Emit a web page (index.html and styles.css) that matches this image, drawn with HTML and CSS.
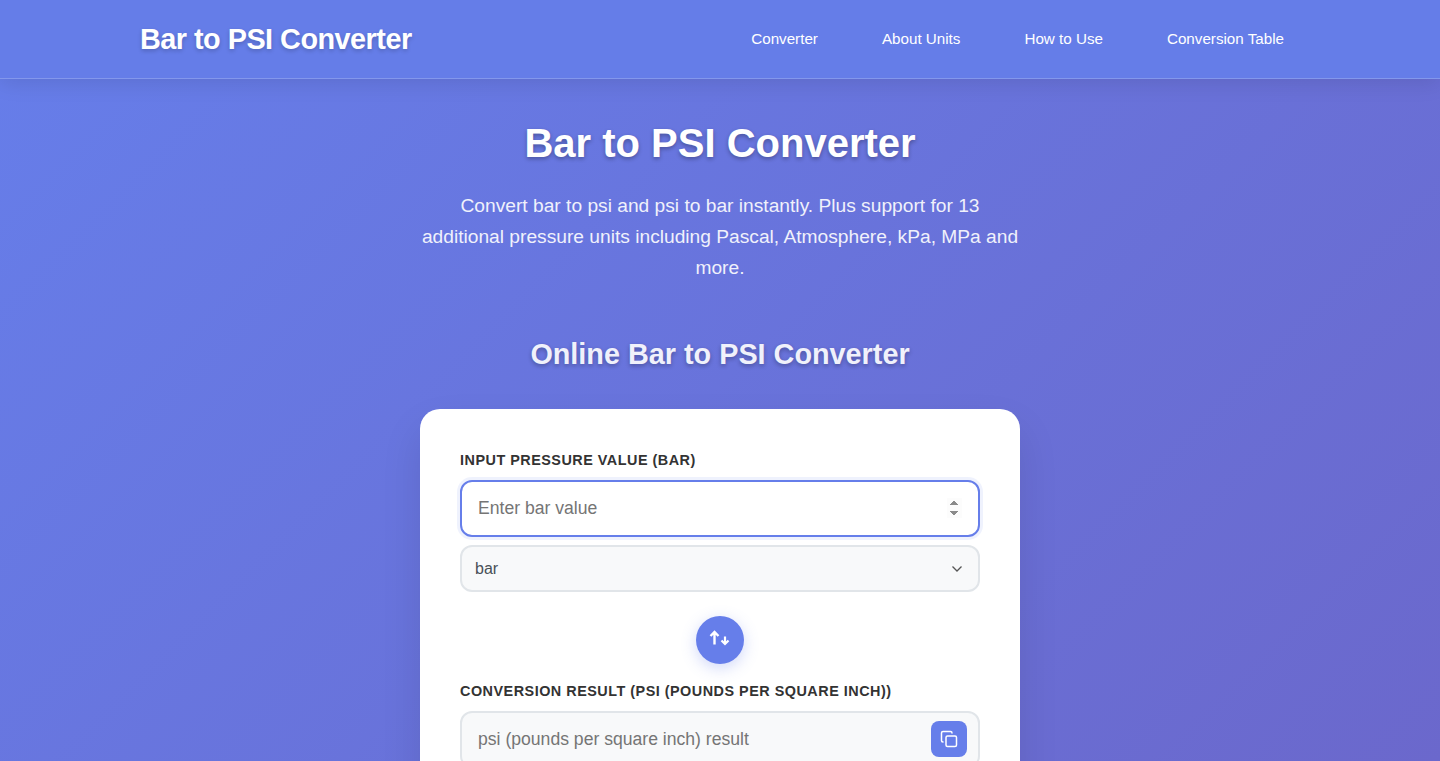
FILE: index.html
```html
<!DOCTYPE html>
<html lang="en">
  <head>
    <meta charset="UTF-8" />
    <meta name="viewport" content="width=device-width, initial-scale=1.0" />
    <title>Bar to PSI Converter</title>
    <link rel="stylesheet" href="styles.css">
  </head>
  <body>
    <header class="site-header">
      <div class="header-inner">
        <a class="logo" href="#">Bar to PSI Converter</a>
        <nav class="main-nav">
          <a href="#converter">Converter</a>
          <a href="#about">About Units</a>
          <a href="#how">How to Use</a>
          <a href="#table">Conversion Table</a>
        </nav>
      </div>
    </header>

    <main class="page">
      <section class="hero">
        <h1>Bar to PSI Converter</h1>
        <p>Convert bar to psi and psi to bar instantly. Plus support for 13 additional pressure units including Pascal, Atmosphere, kPa, MPa and more.</p>
      </section>

      <h2 class="section-title">Online Bar to PSI Converter</h2>

      <section class="converter-card" id="converter">
        <label class="field-label" for="input-value">Input Pressure Value (bar)</label>
        <input class="value-input" id="input-value" type="number" placeholder="Enter bar value" autofocus>
        <select class="unit-select">
          <option>bar</option>
          <option>psi</option>
          <option>Pascal</option>
          <option>Atmosphere</option>
        </select>

        <div class="swap-row">
          <button class="swap-btn" type="button" aria-label="Swap units">
            <svg class="swap-icon" width="22" height="16" viewBox="0 0 22 16" fill="none" stroke="#fff" stroke-width="2.4">
              <path d="M5.5 14.5V2M1.5 6l4-4 4 4" />
              <path d="M16 6.5v7.5M12.5 10.5l3.5 3.5 3.5-3.5" stroke-width="2.2" />
            </svg>
          </button>
        </div>

        <label class="field-label" for="result-value">Conversion Result (psi (pounds per square inch))</label>
        <div class="result-wrap">
          <input class="value-input result-input" id="result-value" type="text" placeholder="psi (pounds per square inch) result" readonly>
          <button class="copy-btn" type="button" aria-label="Copy result">
            <svg width="18" height="18" viewBox="0 0 24 24" fill="none" stroke="#fff" stroke-width="2" stroke-linecap="round" stroke-linejoin="round">
              <rect x="8" y="8" width="14" height="14" rx="2" />
              <path d="M4 16c-1.1 0-2-.9-2-2V4c0-1.1.9-2 2-2h10c1.1 0 2 .9 2 2" />
            </svg>
          </button>
        </div>
      </section>
    </main>
  </body>
</html>
```

FILE: styles.css
```css
* {
  box-sizing: border-box;
}
html,
body {
  height: 761px;
  overflow: hidden;
}
body {
  margin: 0;
  font-family: "Liberation Sans", Arial, sans-serif;
  color: #333;
  background: linear-gradient(135deg, #667eea 0%, #6b68cc 100%);
}
.site-header {
  height: 79px;
  background-color: #657de8;
  border-bottom: 1px solid rgba(255, 255, 255, 0.2);
  box-shadow: 0 4px 20px rgba(0, 0, 0, 0.1);
  position: relative;
}
.header-inner {
  max-width: 1200px;
  height: 100%;
  margin: 0 auto;
  padding: 0 20px;
  display: flex;
  justify-content: space-between;
  align-items: center;
}
.logo {
  color: white;
  font-size: 28.8px;
  font-weight: 700;
  letter-spacing: -0.5px;
  text-decoration: none;
  text-shadow: 0 2px 4px rgba(0, 0, 0, 0.2);
}
.main-nav {
  display: flex;
  gap: 32px;
  margin-bottom: 2px;
}
.main-nav a {
  color: white;
  font-size: 15.2px;
  padding: 8px 16px;
  text-decoration: none;
}
.page {
  max-width: 1200px;
  margin: 0 auto;
  padding: 40px 20px;
}
.hero {
  text-align: center;
  color: white;
}
.hero h1 {
  margin: 0 0 23px;
  font-size: 40px;
  line-height: 1.2;
  text-shadow: 0 2px 4px rgba(0, 0, 0, 0.3);
}
.hero p {
  max-width: 600px;
  margin: 0 auto;
  font-size: 19.2px;
  line-height: 31px;
  opacity: 0.9;
}
.section-title {
  margin: 54px 0 37px;
  text-align: center;
  color: white;
  font-size: 28.8px;
  line-height: 35px;
  opacity: 0.9;
  text-shadow: 0 2px 4px rgba(0, 0, 0, 0.3);
}
.converter-card {
  width: 600px;
  margin: 0 auto;
  padding: 40px;
  background-color: white;
  border-radius: 20px;
  box-shadow: 0 20px 40px rgba(0, 0, 0, 0.1);
}
.field-label {
  display: block;
  margin-bottom: 8px;
  font-size: 14.4px;
  line-height: 23px;
  font-weight: 700;
  letter-spacing: 0.5px;
  text-transform: uppercase;
  color: #333;
}
.value-input {
  display: block;
  width: 100%;
  height: 57px;
  padding: 16px;
  font-family: inherit;
  font-size: 17.6px;
  color: #333;
  background-color: white;
  border: 2px solid #e1e5e9;
  border-radius: 12px;
  outline: none;
}
.value-input:focus {
  border-color: #667eea;
  box-shadow: 0 0 0 3px rgba(102, 126, 234, 0.1);
}
.value-input::placeholder {
  color: #757575;
}
.unit-select {
  display: block;
  width: 100%;
  height: 47px;
  margin-top: 8px;
  padding: 0 13px;
  font-family: inherit;
  font-size: 16px;
  color: #495057;
  appearance: none;
  background-color: #f8f9fa;
  background-image: url("data:image/svg+xml;utf8,<svg xmlns='http://www.w3.org/2000/svg' width='12' height='8' viewBox='0 0 12 8' fill='none' stroke='%23555' stroke-width='1.3'><path d='M1.5 1.5L6 6l4.5-4.5'/></svg>");
  background-repeat: no-repeat;
  background-position: right 15px center;
  border: 2px solid #e1e5e9;
  border-radius: 12px;
}
.swap-row {
  display: flex;
  justify-content: center;
  margin: 24px 0 16px;
}
.swap-btn {
  width: 48px;
  height: 48px;
  padding: 0;
  display: flex;
  align-items: center;
  justify-content: center;
  border: none;
  border-radius: 50%;
  background-color: #667eea;
  box-shadow: 0 4px 15px rgba(102, 126, 234, 0.3);
  cursor: pointer;
}
.swap-icon {
  margin-bottom: 4px;
}
.result-wrap {
  position: relative;
}
.result-input {
  background-color: #f8f9fa;
}
.copy-btn {
  position: absolute;
  top: 10px;
  right: 13px;
  width: 36px;
  height: 36px;
  padding: 0;
  display: flex;
  align-items: center;
  justify-content: center;
  border: none;
  border-radius: 8px;
  background-color: #667eea;
  cursor: pointer;
}
```
